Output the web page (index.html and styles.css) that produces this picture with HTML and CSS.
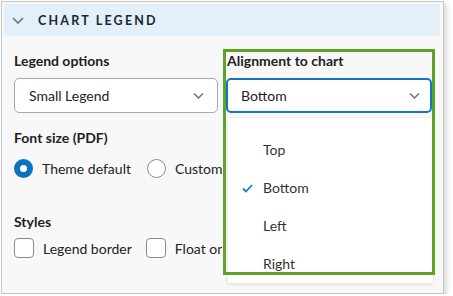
FILE: index.html
```html
<!DOCTYPE html>
<html lang="en">
<head>
    <meta charset="UTF-8">
    <meta name="viewport" content="width=device-width, initial-scale=1.0">
    <title>Chart Legend</title>
    <link rel="stylesheet" href="styles.css">
</head>
<body>
    <div class="card">
        <div class="section-header">
            <svg class="header-chevron" width="12" height="7" viewBox="0 0 12 7">
                <path d="M1 1 L6 6 L11 1" fill="none" stroke="#6b6b6b" stroke-width="1.5"/>
            </svg>
            <span class="section-title">CHART LEGEND</span>
        </div>

        <div class="content">
            <div class="col-left">
                <div class="field-label">Legend options</div>
                <div class="select">
                    <span>Small Legend</span>
                    <svg class="chevron" width="11" height="6" viewBox="0 0 11 6">
                        <path d="M1 0.5 L5.5 5 L10 0.5" fill="none" stroke="#6b6b6b" stroke-width="1.3"/>
                    </svg>
                </div>

                <div class="field-label label-gap">Font size (PDF)</div>
                <div class="option-row">
                    <label class="option"><span class="radio checked"></span>Theme default</label>
                    <label class="option"><span class="radio"></span>Custom</label>
                </div>

                <div class="field-label styles-gap">Styles</div>
                <div class="option-row check-row">
                    <label class="option"><span class="checkbox"></span>Legend border</label>
                    <label class="option"><span class="checkbox"></span>Float on chart</label>
                </div>
            </div>

            <div class="col-right">
                <div class="field-label">Alignment to chart</div>
                <div class="select select-open">
                    <span>Bottom</span>
                    <svg class="chevron" width="11" height="6" viewBox="0 0 11 6">
                        <path d="M1 0.5 L5.5 5 L10 0.5" fill="none" stroke="#6b6b6b" stroke-width="1.3"/>
                    </svg>
                </div>
            </div>
        </div>

        <ul class="menu">
            <li>Top</li>
            <li class="selected">
                <svg class="check" width="11" height="9" viewBox="0 0 11 9">
                    <path d="M1 4.5 L4 7.5 L10 1" fill="none" stroke="#1a7bc9" stroke-width="1.8"/>
                </svg>
                Bottom
            </li>
            <li>Left</li>
            <li>Right</li>
        </ul>

        <div class="highlight"></div>
    </div>
</body>
</html>
```

FILE: styles.css
```css
body {
    margin: 0;
    background-color: white;
    font-family: Lato, "Open Sans", sans-serif;
    color: #222;
}
.card {
    position: relative;
    box-sizing: border-box;
    width: 443px;
    height: 293px;
    margin: 1px 0 0 1px;
    padding: 2px;
    border: 1px solid #c6c6c6;
    background-color: #f8f8f8;
    box-shadow: 3px 3px 5px rgba(0, 0, 0, 0.15);
}
.section-header {
    display: flex;
    align-items: center;
    height: 32px;
    margin-right: 1px;
    background-color: #e3f0f9;
}
.header-chevron {
    margin-left: 8px;
}
.section-title {
    margin-left: 14px;
    font-size: 12.5px;
    font-weight: bold;
    letter-spacing: 2.2px;
    color: #1d2633;
}
.content {
    display: grid;
    grid-template-columns: 208px 210px;
    padding: 16px 0 0 10px;
}
.col-left {
    overflow: hidden;
    white-space: nowrap;
}
.col-right {
    padding-left: 4px;
}
.field-label {
    font-size: 14px;
    font-weight: bold;
    line-height: 18px;
    margin-bottom: 8px;
}
.col-right .field-label {
    padding-left: 1px;
}
.label-gap {
    margin-top: 16px;
    margin-bottom: 10px;
}
.styles-gap {
    margin-top: 34px;
    margin-bottom: 6px;
}
.select {
    box-sizing: border-box;
    display: flex;
    align-items: center;
    justify-content: space-between;
    width: 204px;
    height: 35px;
    padding: 0 13px 0 14px;
    border: 1px solid #a9a9a9;
    border-radius: 5px;
    background-color: white;
    font-size: 14px;
}
.select-open {
    width: 206px;
    border: 2px solid #1275c4;
    padding: 0 10px 0 13px;
}
.option-row {
    display: flex;
    gap: 16px;
    height: 22px;
    align-items: center;
}
.check-row {
    gap: 14px;
}
.option {
    display: flex;
    align-items: center;
    font-size: 14px;
}
.radio {
    box-sizing: border-box;
    width: 19px;
    height: 19px;
    margin-right: 9px;
    border: 1px solid #8a8a8a;
    border-radius: 50%;
    background-color: white;
}
.radio.checked {
    border: 6px solid #0b72c1;
}
.checkbox {
    box-sizing: border-box;
    width: 20px;
    height: 20px;
    margin-right: 9px;
    border: 1px solid #8a8a8a;
    border-radius: 4px;
    background-color: white;
}
.menu {
    position: absolute;
    left: 226px;
    top: 116px;
    width: 205px;
    height: 165px;
    margin: 0;
    padding: 13px 0 0 0;
    box-sizing: border-box;
    list-style: none;
    background-color: white;
    box-shadow: 0 1px 4px rgba(0, 0, 0, 0.12);
}
.menu li {
    position: relative;
    height: 38px;
    line-height: 38px;
    padding-left: 35px;
    font-size: 14px;
    color: #333;
}
.check {
    position: absolute;
    left: 14px;
    top: 15px;
}
.highlight {
    position: absolute;
    left: 221px;
    top: 47px;
    width: 212px;
    height: 226px;
    box-sizing: border-box;
    border: 3px solid #5ea226;
}
```
